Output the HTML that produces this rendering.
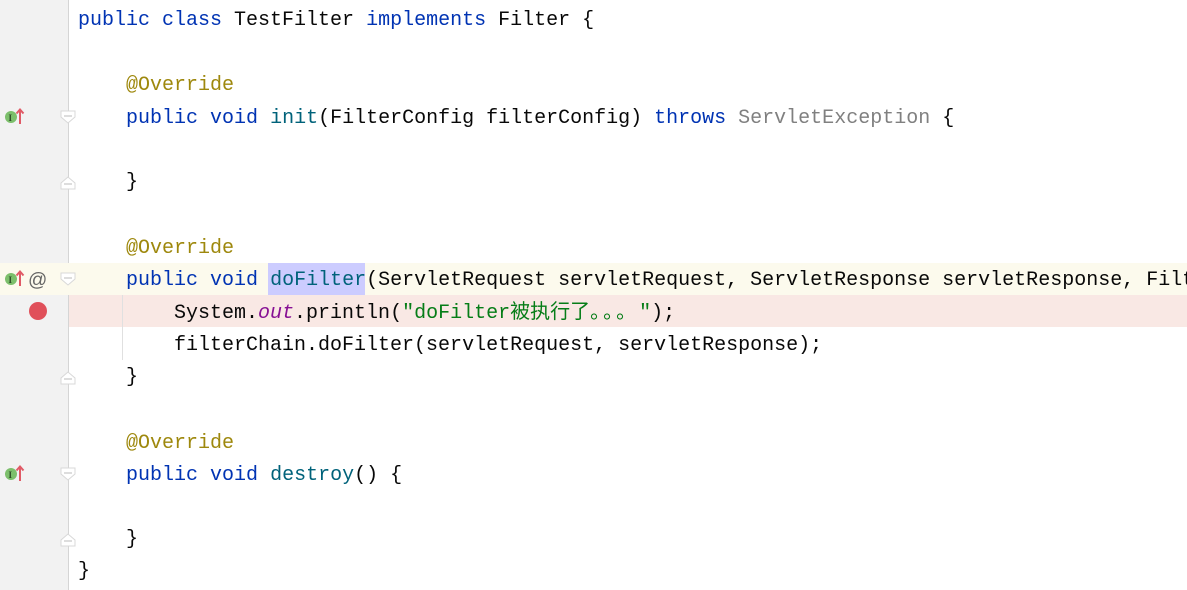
<!DOCTYPE html>
<html><head><meta charset="utf-8"><style>
body{margin:0;width:1187px;height:590px;overflow:hidden;background:#fff;position:relative;font-family:"Liberation Mono","Noto Sans CJK SC",monospace;font-size:20px}
.g{position:absolute;left:0;top:0;width:68px;height:590px;background:#f2f2f2;border-right:1px solid #d5d5d5}
.l{position:absolute;left:78px;right:0;overflow:hidden;white-space:pre;height:32px;line-height:32px;color:#080808}
.k{color:#0033b3}.m{color:#00627a}.a{color:#9e880d}.gr{color:#808080}.s{color:#067d17}.o{color:#871094;font-style:italic}
.ic{position:absolute}
.p{letter-spacing:3px}
</style></head><body>
<div class="g"></div>
<div style="position:absolute;left:0;top:263px;width:1187px;height:32px;background:#fcfaed"></div>
<div style="position:absolute;left:69px;top:295px;width:1118px;height:32px;background:#f9e8e4"></div>
<div style="position:absolute;left:268px;top:263px;width:97px;height:32px;background:#ccccff"></div>
<div style="position:absolute;left:122px;top:295px;width:1px;height:65px;background:#e0e0e0"></div>

<div class="l" style="top:5px"><span class="k">public class</span> TestFilter <span class="k">implements</span> Filter {</div>
<div class="l" style="top:70px">    <span class="a">@Override</span></div>
<div class="l" style="top:103px">    <span class="k">public void</span> <span class="m">init</span>(FilterConfig filterConfig) <span class="k">throws</span> <span class="gr">ServletException</span> {</div>
<div class="l" style="top:167px">    }</div>
<div class="l" style="top:233px">    <span class="a">@Override</span></div>
<div class="l" style="top:265px">    <span class="k">public void</span> <span class="m">doFilter</span>(ServletRequest servletRequest, ServletResponse servletResponse, FilterChain filterChain)</div>
<div class="l" style="top:298px">        System.<span class="o">out</span>.println(<span class="s">"doFilter被执行了<span class="p">。。。</span>"</span>);</div>
<div class="l" style="top:330px">        filterChain.doFilter(servletRequest, servletResponse);</div>
<div class="l" style="top:362px">    }</div>
<div class="l" style="top:428px">    <span class="a">@Override</span></div>
<div class="l" style="top:460px">    <span class="k">public void</span> <span class="m">destroy</span>() {</div>
<div class="l" style="top:524px">    }</div>
<div class="l" style="top:556px">}</div>

<svg class="ic" style="left:0;top:0" width="80" height="590">
<g id="impl">
<circle cx="11" cy="117" r="6" fill="#7cbf6b"/><text x="8.5" y="121" font-size="9" font-family="Liberation Serif" font-weight="bold" fill="#2d4a27">I</text>
<path d="M20 124V110M16.5 113.5L20 109.5L23.5 113.5" stroke="#e05a66" stroke-width="2" fill="none"/>
</g>
<use href="#impl" y="162"/>
<use href="#impl" y="357"/>
<text x="28" y="286" font-size="19" font-family="Liberation Sans" fill="#666">@</text>
<circle cx="38" cy="311" r="9" fill="#e0505a"/>
<g fill="#fff" stroke="#d8d8d8">
<path d="M61 111h14v6l-7 6l-7-6z"/><path d="M61 273h14v6l-7 6l-7-6z"/><path d="M61 468h14v6l-7 6l-7-6z"/>
<path d="M61 189h14v-6l-7-6l-7 6z"/><path d="M61 384h14v-6l-7-6l-7 6z"/><path d="M61 546h14v-6l-7-6l-7 6z"/>
</g>
<g stroke="#bbb"><path d="M64 116h8M64 278h8M64 473h8M64 184h8M64 379h8M64 541h8"/></g>
</svg>
</body></html>
